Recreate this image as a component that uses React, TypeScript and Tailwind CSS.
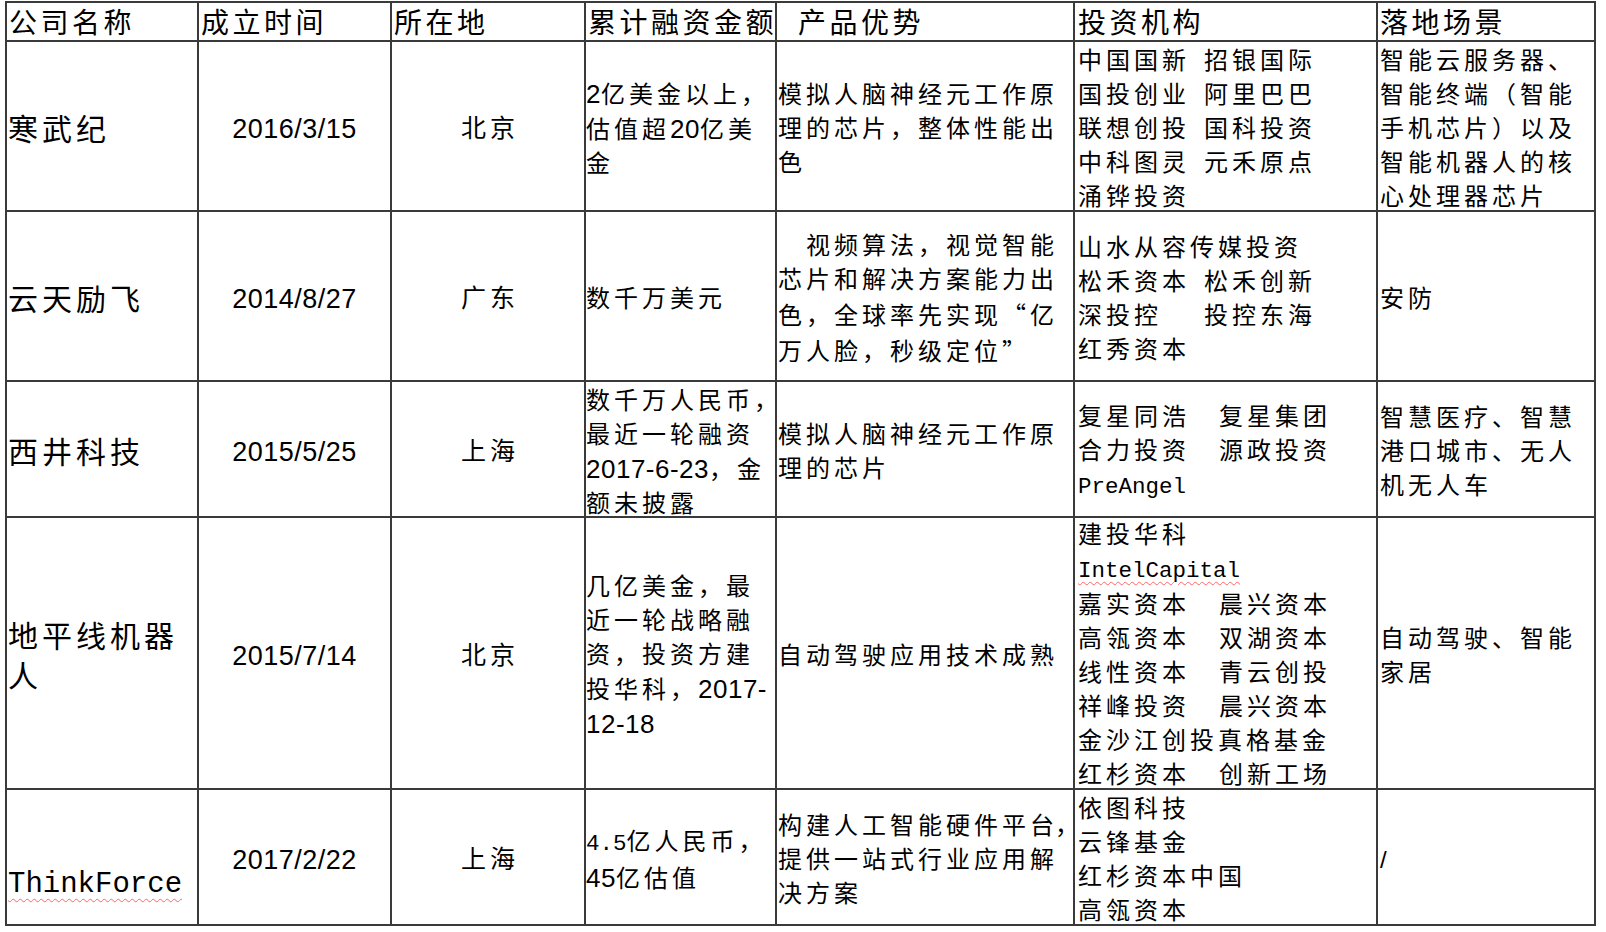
import type { ReactNode } from "react";

const cjk = "font-['Liberation_Sans','Noto_Sans_CJK_SC',sans-serif]";
const mono = "font-['Liberation_Mono','Noto_Sans_CJK_SC',monospace] tracking-normal";

function Num({ children }: { children: ReactNode }) {
    return <span className="text-[26px] tracking-[0.5px]">{children}</span>;
}

function Mono({ children, wavy }: { children: ReactNode; wavy?: boolean }) {
    return (
        <span
            className={`${mono} text-[22.5px] ${wavy ? "underline decoration-wavy decoration-red-400 decoration-1 underline-offset-4" : ""}`}
        >
            {children}
        </span>
    );
}

// full-width quote marks, forced to the CJK face
function Q({ children }: { children: ReactNode }) {
    return <span className="font-['Noto_Sans_CJK_SC',sans-serif]">{children}</span>;
}

function Cell({ children, className = "" }: { children?: ReactNode; className?: string }) {
    return <div className={`bg-white flex items-center min-w-0 ${className}`}>{children}</div>;
}

function Lines({ lines, className = "" }: { lines: ReactNode[]; className?: string }) {
    return (
        <div className={`text-[24px] tracking-[4px] leading-[34px] ${className}`}>
            {lines.map((l, i) => (
                <div key={i} className="whitespace-nowrap">
                    {l}
                </div>
            ))}
        </div>
    );
}

function Pair({ a, b, w = "w-[126px]" }: { a: string; b: string; w?: string }) {
    return (
        <>
            <span className={`inline-block ${w}`}>{a}</span>
            {b}
        </>
    );
}

function Company({ children, className = "" }: { children: ReactNode; className?: string }) {
    return (
        <Cell className={`pl-[1px] pt-[7px] ${className}`}>
            <div className="text-[30px] tracking-[4px] leading-[40px]">{children}</div>
        </Cell>
    );
}

function DateCell({ value }: { value: string }) {
    return (
        <Cell className="justify-center pt-[6px]">
            <span className="text-[27px] tracking-[0.5px]">{value}</span>
        </Cell>
    );
}

function Place({ value }: { value: string }) {
    return (
        <Cell className="justify-center pt-[6px]">
            <span className="text-[25px] tracking-[4px] pl-[4px]">{value}</span>
        </Cell>
    );
}

const headers = ["公司名称", "成立时间", "所在地", "累计融资金额", "产品优势", "投资机构", "落地场景"];

export default function App() {
    return (
        <div className={`min-h-screen bg-white text-black ${cjk}`}>
            <div className="grid w-fit grid-cols-[190px_191px_192px_189px_296px_301px_216px] grid-rows-[37px_168px_168px_134px_270px_134px] gap-[2px] p-[2px] bg-[#3a3a3a] ml-[5px] mt-[1px]">
                {headers.map((h, i) => (
                    <Cell key={h} className={`pt-[5px] ${i === 4 ? "pl-[21px]" : i === 5 ? "pl-[3px]" : "pl-[2px]"}`}>
                        <span className="text-[28px] tracking-[3.5px] leading-[32px] whitespace-nowrap">{h}</span>
                    </Cell>
                ))}

                {/* 寒武纪 */}
                <Company>寒武纪</Company>
                <DateCell value="2016/3/15" />
                <Place value="北京" />
                <Cell className="pt-[6px]">
                    <Lines
                        lines={[
                            <><Num>2</Num>亿美金以上，</>,
                            <>估值超<Num>20</Num>亿美</>,
                            "金",
                        ]}
                    />
                </Cell>
                <Cell className="pl-[1px] pt-[6px]">
                    <Lines lines={["模拟人脑神经元工作原", "理的芯片，整体性能出", "色"]} />
                </Cell>
                <Cell className="pl-[3px] pt-[6px]">
                    <Lines
                        lines={[
                            <Pair a="中国国新" b="招银国际" />,
                            <Pair a="国投创业" b="阿里巴巴" />,
                            <Pair a="联想创投" b="国科投资" />,
                            <Pair a="中科图灵" b="元禾原点" />,
                            "涌铧投资",
                        ]}
                    />
                </Cell>
                <Cell className="pl-[2px] pt-[6px]">
                    <Lines lines={["智能云服务器、", "智能终端（智能", "手机芯片）以及", "智能机器人的核", "心处理器芯片"]} />
                </Cell>

                {/* 云天励飞 */}
                <Company>云天励飞</Company>
                <DateCell value="2014/8/27" />
                <Place value="广东" />
                <Cell className="pt-[6px]">
                    <Lines lines={["数千万美元"]} />
                </Cell>
                <Cell className="pl-[1px] pt-[6px]">
                    <Lines
                        lines={[
                            "　视频算法，视觉智能",
                            "芯片和解决方案能力出",
                            <>色，全球率先实现<Q>“</Q>亿</>,
                            <>万人脸，秒级定位<Q>”</Q></>,
                        ]}
                    />
                </Cell>
                <Cell className="pl-[3px] pt-[6px]">
                    <Lines
                        lines={[
                            "山水从容传媒投资",
                            <Pair a="松禾资本" b="松禾创新" />,
                            <Pair a="深投控" b="投控东海" />,
                            "红秀资本",
                        ]}
                    />
                </Cell>
                <Cell className="pl-[2px] pt-[6px]">
                    <Lines lines={["安防"]} />
                </Cell>

                {/* 西井科技 */}
                <Company>西井科技</Company>
                <DateCell value="2015/5/25" />
                <Place value="上海" />
                <Cell className="pt-[6px]">
                    <Lines
                        lines={[
                            "数千万人民币，",
                            "最近一轮融资",
                            <><Num>2017-6-23</Num>，金</>,
                            "额未披露",
                        ]}
                    />
                </Cell>
                <Cell className="pl-[1px] pt-[6px]">
                    <Lines lines={["模拟人脑神经元工作原", "理的芯片"]} />
                </Cell>
                <Cell className="pl-[3px] pt-[6px]">
                    <Lines
                        lines={[
                            <Pair a="复星同浩" b="复星集团" w="w-[141px]" />,
                            <Pair a="合力投资" b="源政投资" w="w-[141px]" />,
                            <Mono>PreAngel</Mono>,
                        ]}
                    />
                </Cell>
                <Cell className="pl-[2px] pt-[6px]">
                    <Lines lines={["智慧医疗、智慧", "港口城市、无人", "机无人车"]} />
                </Cell>

                {/* 地平线机器人 */}
                <Company>
                    地平线机器
                    <br />人
                </Company>
                <DateCell value="2015/7/14" />
                <Place value="北京" />
                <Cell className="pt-[6px]">
                    <Lines
                        lines={[
                            "几亿美金，最",
                            "近一轮战略融",
                            "资，投资方建",
                            <>投华科，<Num>2017-</Num></>,
                            <Num>12-18</Num>,
                        ]}
                    />
                </Cell>
                <Cell className="pl-[1px] pt-[6px]">
                    <Lines lines={["自动驾驶应用技术成熟"]} />
                </Cell>
                <Cell className="pl-[3px] pt-[4px]">
                    <Lines
                        lines={[
                            "建投华科",
                            <Mono wavy>IntelCapital</Mono>,
                            <Pair a="嘉实资本" b="晨兴资本" w="w-[141px]" />,
                            <Pair a="高瓴资本" b="双湖资本" w="w-[141px]" />,
                            <Pair a="线性资本" b="青云创投" w="w-[141px]" />,
                            <Pair a="祥峰投资" b="晨兴资本" w="w-[141px]" />,
                            "金沙江创投真格基金",
                            <Pair a="红杉资本" b="创新工场" w="w-[141px]" />,
                        ]}
                    />
                </Cell>
                <Cell className="pl-[2px] pt-[6px]">
                    <Lines lines={["自动驾驶、智能", "家居"]} />
                </Cell>

                {/* ThinkForce */}
                <Cell className="pl-[1px] items-end pb-[19px]">
                    <span className={`${mono} text-[29px] leading-[40px] underline decoration-wavy decoration-red-400 decoration-1 underline-offset-[6px]`}>
                        ThinkForce
                    </span>
                </Cell>
                <DateCell value="2017/2/22" />
                <Place value="上海" />
                <Cell className="pt-[6px]">
                    <Lines
                        lines={[
                            <><Mono>4.5</Mono>亿人民币，</>,
                            <><Num>45</Num>亿估值</>,
                        ]}
                    />
                </Cell>
                <Cell className="pl-[1px] pt-[6px]">
                    <Lines
                        lines={[
                            <>构建人工智能硬件平台<span className="inline-block w-[12px] -ml-[3px]">，</span></>,
                            "提供一站式行业应用解",
                            "决方案",
                        ]}
                    />
                </Cell>
                <Cell className="pl-[3px] pt-[6px]">
                    <Lines lines={["依图科技", "云锋基金", "红杉资本中国", "高瓴资本"]} />
                </Cell>
                <Cell className="pl-[2px] pt-[6px]">
                    <span className="text-[24px]">/</span>
                </Cell>
            </div>
        </div>
    );
}
